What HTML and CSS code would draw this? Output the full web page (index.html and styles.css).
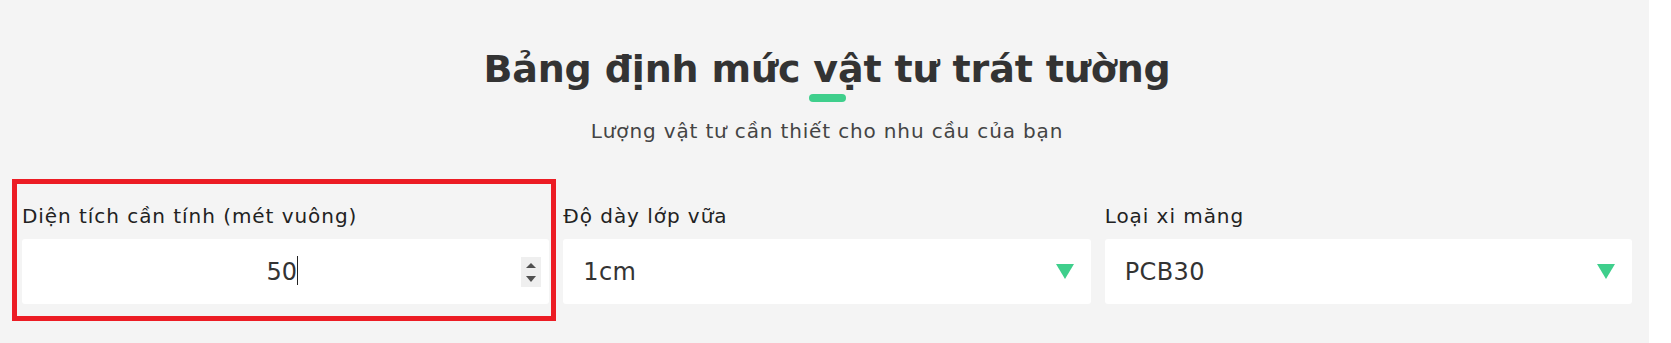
FILE: index.html
```html
<!DOCTYPE html>
<html lang="vi">
<head>
<meta charset="utf-8">
<title>Bảng định mức vật tư trát tường</title>
<link rel="stylesheet" href="styles.css">
</head>
<body>
<div class="page">
  <header class="head">
    <h1 class="title">Bảng định mức vật tư trát tường</h1>
    <div class="bar"></div>
    <p class="subtitle">Lượng vật tư cần thiết cho nhu cầu của bạn</p>
  </header>
  <div class="fields">
    <div class="field field-marked">
      <div class="label">Diện tích cần tính (mét vuông)</div>
      <div class="box box-number">
        <div class="num"><span class="num-text">50</span><span class="caret"></span></div>
        <div class="spin">
          <svg width="20" height="30" viewBox="0 0 20 30">
            <polygon points="5,11 15,11 10,6" fill="#505050"/>
            <polygon points="5,19 15,19 10,25" fill="#505050"/>
          </svg>
        </div>
      </div>
    </div>
    <div class="field">
      <div class="label">Độ dày lớp vữa</div>
      <div class="box box-select">
        <span class="sel-text">1cm</span>
        <svg class="arrow" width="18" height="15" viewBox="0 0 18 15"><polygon points="0,0 18,0 9,15" fill="#3fcf8c"/></svg>
      </div>
    </div>
    <div class="field">
      <div class="label">Loại xi măng</div>
      <div class="box box-select">
        <span class="sel-text">PCB30</span>
        <svg class="arrow" width="18" height="15" viewBox="0 0 18 15"><polygon points="0,0 18,0 9,15" fill="#3fcf8c"/></svg>
      </div>
    </div>
  </div>
</div>
</body>
</html>
```
FILE: styles.css
```css
html, body {
  margin: 0;
  padding: 0;
  background: #ffffff;
}
body {
  font-family: "DejaVu Sans", "Noto Sans", sans-serif;
  color: #222;
}
.page {
  width: 1649px;
  min-height: 343px;
  box-sizing: border-box;
  background: #f4f4f4;
  padding: 46px 17px 0 22px;
}
.head {
  display: flex;
  flex-direction: column;
  align-items: center;
}
.title {
  margin: 0;
  font-size: 38px;
  line-height: 46px;
  font-weight: 700;
  color: #333;
  letter-spacing: -0.15px;
}
.bar {
  width: 37px;
  height: 8px;
  border-radius: 4px;
  background: #3fcf8c;
  margin-top: 2px;
}
.subtitle {
  margin: 17px 0 0;
  font-size: 20px;
  line-height: 24px;
  color: #444;
  letter-spacing: 0.85px;
}
.fields {
  display: grid;
  grid-template-columns: 1fr 1fr 1fr;
  column-gap: 14px;
  margin-top: 61px;
}
.field {
  position: relative;
}
.field-marked::after {
  content: "";
  position: absolute;
  left: -10px;
  right: -7px;
  top: -25px;
  bottom: -17px;
  border: 5px solid #ec1c24;
  pointer-events: none;
}
.label {
  font-size: 20px;
  line-height: 24px;
  color: #222;
  letter-spacing: 0.95px;
}
.box {
  margin-top: 11px;
  height: 65px;
  background: #fff;
  border-radius: 3px;
  display: flex;
  align-items: center;
  box-sizing: border-box;
}
.box-number {
  padding-right: 8px;
}
.num {
  flex: 1;
  text-align: center;
  padding-left: 21px;
  font-size: 24px;
  line-height: 30px;
  color: #333;
}
.caret {
  display: inline-block;
  width: 1px;
  height: 29px;
  background: #222;
  vertical-align: -5px;
}
.spin {
  width: 20px;
  height: 30px;
  background: #efefef;
  display: flex;
}
.box-select {
  padding: 0 17px 0 20px;
  justify-content: space-between;
}
.sel-text {
  font-size: 24px;
  line-height: 30px;
  color: #333;
  letter-spacing: 0.4px;
}
.arrow {
  display: block;
}
```
